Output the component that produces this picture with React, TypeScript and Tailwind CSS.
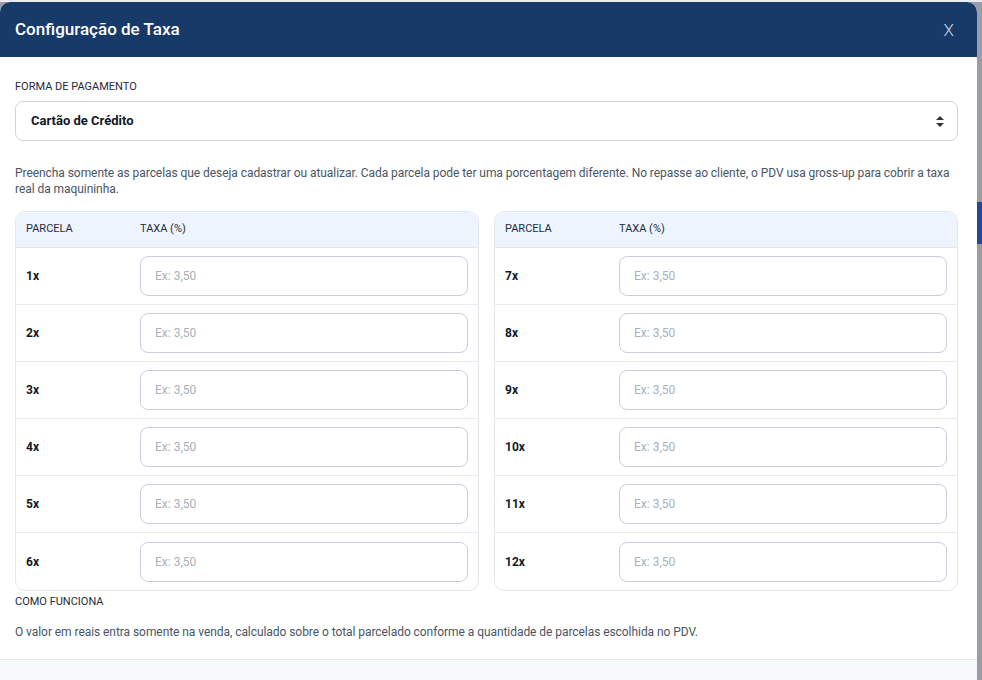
const left = ["1x", "2x", "3x", "4x", "5x", "6x"];
const right = ["7x", "8x", "9x", "10x", "11x", "12x"];

function TaxTable({ rows }: { rows: string[] }) {
  return (
    <div className="flex-1 border border-[#e3e8ef] rounded-[10px] overflow-hidden">
      <div className="flex items-center h-[36px] bg-[#eef4fe] border-b border-[#e3e8ef] text-[11px] text-[#1f2d3d]">
        <div className="w-[124px] pl-[10px]">PARCELA</div>
        <div>TAXA (%)</div>
      </div>
      {rows.map((r, i) => (
        <div
          key={r}
          className={
            "flex items-center h-[57px] " +
            (i < rows.length - 1 ? "border-b border-[#e8ecf1]" : "")
          }
        >
          <div className="w-[124px] pl-[10px] text-[12px] font-bold text-[#111827]">{r}</div>
          <input
            placeholder="Ex: 3,50"
            className="flex-1 mr-[10px] h-[40px] border border-[#c9d0da] rounded-[8px] px-[14px] text-[12px] placeholder:text-[#a9b1bc] outline-none"
          />
        </div>
      ))}
    </div>
  );
}

export default function App() {
  return (
    <div
      className="w-[982px] h-[680px] overflow-hidden bg-[#9a9ea4] flex flex-col"
      style={{ fontFamily: "Roboto, 'Liberation Sans', sans-serif" }}
    >
      <div className="h-[2px] bg-[#e8ebef] shrink-0" />
      <div className="flex flex-1 min-h-0">
        <div className="w-[977px] bg-white rounded-t-[10px] overflow-hidden flex flex-col">
          <div className="h-[55px] bg-[#183a68] flex items-center justify-between pl-[15px] pr-[23px] shrink-0">
            <h1 className="text-white text-[17px] font-medium">Configuração de Taxa</h1>
            <span className="text-[#c9d4e3] text-[17px] font-light mt-[2px]">X</span>
          </div>
          <div className="pl-[15px] pr-[19px] pt-[22px] flex flex-col">
            <label className="text-[11px] text-[#1f2937] leading-[16px]">FORMA DE PAGAMENTO</label>
            <div className="mt-[6px] h-[40px] border border-[#cfd5dd] rounded-[8px] flex items-center justify-between pl-[15px] pr-[13px]">
              <span className="text-[13px] font-bold text-[#111827]">Cartão de Crédito</span>
              <svg width="8" height="11" viewBox="0 0 8 11" className="text-[#333]">
                <path d="M4 0 L8 4 H0 Z M0 7 H8 L4 11 Z" fill="currentColor" />
              </svg>
            </div>
            <p className="mt-[24px] text-[12px] leading-[16px] tracking-[-0.06px] text-[#4a5565]">
              Preencha somente as parcelas que deseja cadastrar ou atualizar. Cada parcela pode ter uma porcentagem diferente. No repasse ao cliente, o PDV usa gross-up para cobrir a taxa real da maquininha.
            </p>
            <div className="mt-[14px] flex gap-[15px]">
              <TaxTable rows={left} />
              <TaxTable rows={right} />
            </div>
            <div className="mt-[3px] text-[11px] text-[#1f2937] leading-[16px]">COMO FUNCIONA</div>
            <p className="mt-[14px] text-[12px] leading-[16px] tracking-[-0.06px] text-[#4a5565]">
              O valor em reais entra somente na venda, calculado sobre o total parcelado conforme a quantidade de parcelas escolhida no PDV.
            </p>
          </div>
          <div className="mt-[19px] flex-1 border-t border-[#e3e8ef] bg-[#f7fafd]" />
        </div>
        <div className="flex-1 flex flex-col">
          <div className="h-[200px]" />
          <div className="h-[42px] bg-[#1d4a9a]" />
        </div>
      </div>
    </div>
  );
}
